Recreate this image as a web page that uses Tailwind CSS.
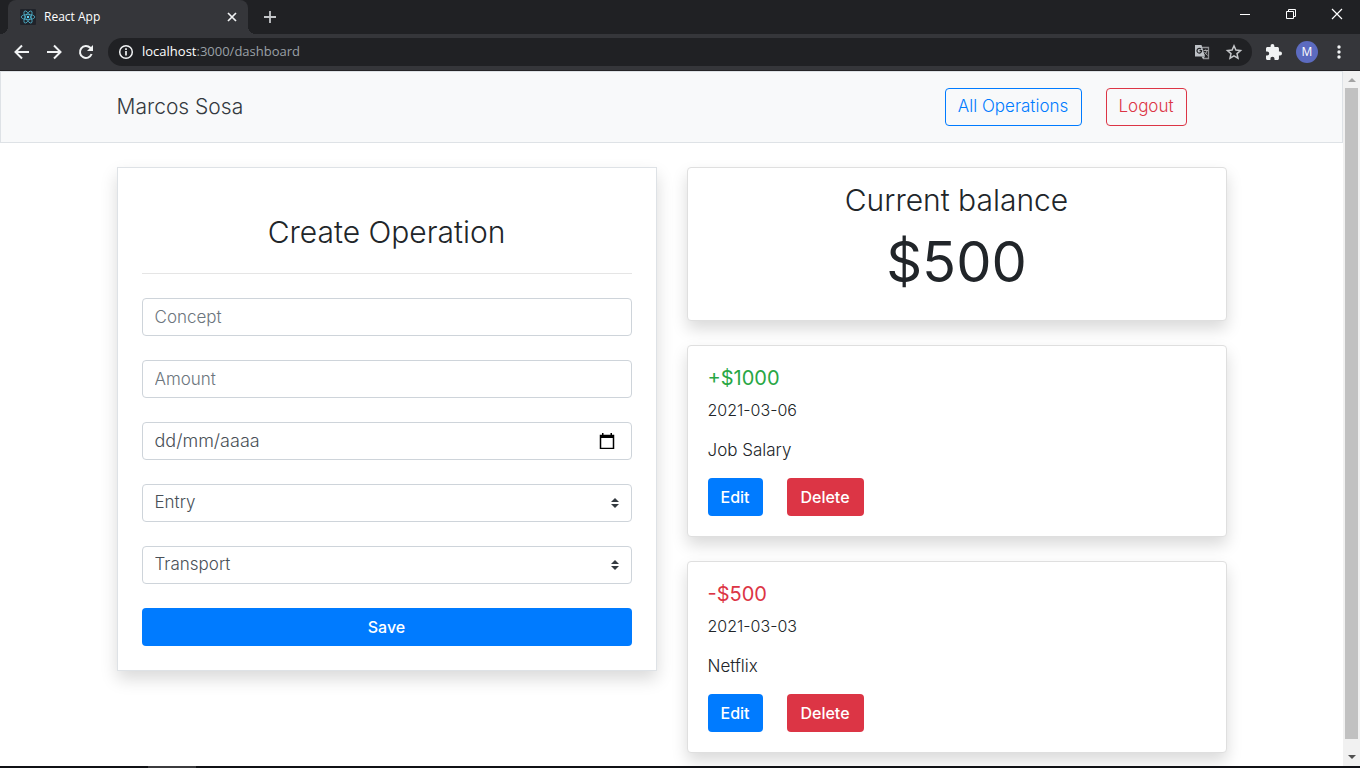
<!DOCTYPE html>
<html lang="en">
<head>
<meta charset="utf-8">
<title>React App</title>
<script src="https://cdn.jsdelivr.net/npm/@tailwindcss/browser@4"></script>
</head>
<body class="flex h-screen flex-col overflow-hidden bg-white font-['Inter',sans-serif] text-base text-[#212529]">

<!-- Browser window -->
<header class="flex-none border-b border-[#252427] bg-[#202124] font-['Open_Sans',sans-serif] text-white">
  <div class="flex h-[34px] pl-2">
    <div class="relative flex w-60 items-center rounded-t-lg bg-[#35363a] pr-2.5 pl-3">
      <span class="absolute bottom-0 -left-2 h-2 w-2 bg-[radial-gradient(circle_at_0_0,#202124_8px,#35363a_8px)]"></span>
      <span class="absolute -right-2 bottom-0 h-2 w-2 bg-[radial-gradient(circle_at_100%_0,#202124_8px,#35363a_8px)]"></span>
      <svg class="size-4" viewBox="0 0 16 16" fill="none" stroke="#4fb3cc" stroke-width=".8"><rect width="16" height="16" rx="1" fill="#20232a" stroke="none"/><ellipse cx="8" cy="8" rx="6.800" ry="2.600"/><ellipse cx="8" cy="8" rx="6.800" ry="2.600" transform="rotate(60 8 8)"/><ellipse cx="8" cy="8" rx="6.800" ry="2.600" transform="rotate(120 8 8)"/><circle cx="8" cy="8" r="1.200" fill="#61dafb" stroke="none"/></svg>
      <span class="ml-2 flex-1 text-xs">React App</span>
      <button aria-label="Close tab" class="flex size-3 items-center justify-center"><svg class="size-3" viewBox="0 0 12 12" stroke="#f1f3f4" stroke-width="1.700"><path d="M2 2l8 8M10 2l-8 8"/></svg></button>
    </div>
    <button aria-label="New tab" class="ml-4 flex w-3 items-center justify-center"><svg class="size-3 flex-none" viewBox="0 0 12 12" stroke="#c4c6c9" stroke-width="1.800"><path d="M6 0v12M0 6h12"/></svg></button>
    <div class="ml-auto flex h-7 items-center">
      <button aria-label="Minimize" class="flex w-[46px] justify-center"><svg class="size-3" viewBox="0 0 12 12" stroke="#fff"><path d="M1 6.500h10"/></svg></button>
      <button aria-label="Restore" class="flex w-[46px] justify-center"><svg class="size-3" viewBox="0 0 12 12" fill="none" stroke="#fff"><path d="M1.500 3.500h7v7h-7zM3.500 3.500v-2h7v7h-2"/></svg></button>
      <button aria-label="Close" class="flex w-[46px] justify-center"><svg class="size-3" viewBox="0 0 12 12" stroke="#fff" stroke-width="1.200"><path d="M1 1l10 10M11 1L1 11"/></svg></button>
    </div>
  </div>
  <div class="flex h-9 items-center bg-[#35363a] pr-2.5 pl-3">
    <button aria-label="Back" class="mr-3"><svg class="size-5" viewBox="0 0 20 20" fill="none" stroke="#f1f3f4" stroke-width="2"><path d="M17 10H4M10 3.500L3.500 10l6.500 6.500"/></svg></button>
    <button aria-label="Forward" class="mr-3"><svg class="size-5" viewBox="0 0 20 20" fill="none" stroke="#f1f3f4" stroke-width="2"><path d="M3 10h13M10 3.500l6.500 6.500-6.500 6.500"/></svg></button>
    <button aria-label="Reload" class="mr-3"><svg class="size-5" viewBox="0 0 20 20" fill="none" stroke="#f1f3f4" stroke-width="2"><path d="M15.600 12a6 6 0 1 1-1.300-6.200l1.500 1.500"/><path d="M17 3v6h-6z" fill="#f1f3f4" stroke="none"/></svg></button>
    <div class="flex h-7 flex-1 items-center rounded-full bg-[#202124] pr-2 pl-2">
      <svg class="size-5" viewBox="0 0 20 20" fill="none" stroke="#f1f3f4" stroke-width="1.500"><circle cx="10" cy="10" r="6.300"/><path d="M10 9v4.500M10 6.300v1.600" stroke-width="1.700"/></svg>
      <span class="ml-1.5 flex-1 text-[13px] text-[#9aa0a6]"><span class="text-white">localhost</span>:3000/dashboard</span>
      <button aria-label="Translate this page" class="mr-3.5"><svg class="size-4" viewBox="0 0 16 16"><path d="M6 3.500h8.500v11H9" fill="none" stroke="#8f9093" stroke-width="1.300"/><path d="M1 1h6.500l3.500 11.500H1z" fill="#bdc1c6"/><path d="M7.500 12.500h3.500l-2 2.500z" fill="#bdc1c6"/><path d="M7 5.200a2.300 2.300 0 1 0 .6 1.500H5.500" fill="none" stroke="#202124" stroke-width="1.200"/><path d="M9.500 6.500H14M11.700 5.500v1M13 6.800c-.5 2-1.500 3-2.500 3.700M10.500 8l3 3.500" fill="none" stroke="#a8a9ac"/></svg></button>
      <button aria-label="Bookmark this tab"><svg class="size-5" viewBox="0 0 20 20" fill="none" stroke="#c4c6c9" stroke-width="1.500"><path d="M10 3.800l1.900 4.300 4.600.4-3.500 3.100 1 4.600-4-2.400-4 2.400 1-4.600-3.500-3.100 4.600-.4z"/></svg></button>
    </div>
    <button aria-label="Extensions" class="ml-3.5"><svg class="size-4" viewBox="2 1 21 21" fill="#f1f3f4"><path d="M20.500 11H19V7c0-1.100-.9-2-2-2h-4V3.500a2.500 2.500 0 0 0-5 0V5H4c-1.100 0-2 .9-2 2v3.800h1.500a2.700 2.700 0 0 1 0 5.400H2V20c0 1.100.9 2 2 2h3.800v-1.500a2.700 2.700 0 0 1 5.400 0V22H17c1.100 0 2-.9 2-2v-4h1.500a2.500 2.500 0 0 0 0-5z"/></svg></button>
    <button class="ml-3.5 flex size-[22px] items-center justify-center rounded-full bg-[#5c6bc0] text-xs">M</button>
    <button aria-label="Menu" class="ml-3"><svg class="size-5" viewBox="0 0 20 20" fill="#f1f3f4"><circle cx="9" cy="5" r="1.700"/><circle cx="9" cy="10" r="1.700"/><circle cx="9" cy="15" r="1.700"/></svg></button>
  </div>
</header>

<div class="flex min-h-0 flex-1">
  <div class="flex-1 overflow-hidden">
    <nav class="border border-[#dee2e6] bg-[#f8f9fa] py-4">
      <div class="mx-auto flex max-w-[1140px] items-center pr-[55px] pl-[15px]">
        <a href="#" class="mr-auto text-[21px] leading-7 font-light text-[#343a40]">Marcos Sosa</a>
        <button class="h-[38px] w-[137px] rounded border border-[#007bff] text-[17px] font-light text-[#007bff]">All Operations</button>
        <button class="ml-6 h-[38px] w-[81px] rounded border border-[#dc3545] text-[17px] font-light text-[#dc3545]">Logout</button>
      </div>
    </nav>

    <main class="mx-auto grid max-w-[1140px] grid-cols-2 items-start gap-[30px] px-[15px] py-6">
      <form class="flex flex-col gap-6 border border-[#dee2e6] bg-white p-6 text-[17px] font-light text-[#495057] shadow-[0_8px_16px_rgba(0,0,0,0.15)]">
        <h2 class="mt-6 text-center text-[30px] leading-[33px] text-[#212529]">Create Operation</h2>
        <hr class="border-black/10">
        <input aria-label="Concept" placeholder="Concept" class="h-[38px] w-full rounded border border-[#ced4da] px-3 placeholder:text-[#6c757d]">
        <input aria-label="Amount" placeholder="Amount" class="h-[38px] w-full rounded border border-[#ced4da] px-3 placeholder:text-[#6c757d]">
        <div class="flex h-[38px] items-center rounded border border-[#ced4da] px-3">
          <input aria-label="Date" placeholder="dd/mm/aaaa" class="min-w-0 flex-1 text-lg placeholder:text-[#495057]">
          <button type="button" aria-label="Choose date" class="mr-1"><svg class="size-4" viewBox="0 0 16 16"><path d="M1.500 2.500h13v13h-13z" fill="none" stroke="#000" stroke-width="1.500"/><path d="M1 2h14v3H1zM3 0h1.500v2H3zM11.500 0H13v2h-1.500z"/></svg></button>
        </div>
        <div class="grid items-center">
          <select aria-label="Type" class="col-start-1 row-start-1 h-[38px] w-full appearance-none rounded border border-[#ced4da] px-3"><option>Entry</option><option>Egress</option></select>
          <svg class="pointer-events-none col-start-1 row-start-1 mr-[13px] h-2.5 w-2 justify-self-end" viewBox="0 0 8 10" fill="#343a40"><path d="M0 4l4-4 4 4zM0 6l4 4 4-4z"/></svg>
        </div>
        <div class="grid items-center">
          <select aria-label="Category" class="col-start-1 row-start-1 h-[38px] w-full appearance-none rounded border border-[#ced4da] px-3"><option>Transport</option><option>Food</option></select>
          <svg class="pointer-events-none col-start-1 row-start-1 mr-[13px] h-2.5 w-2 justify-self-end" viewBox="0 0 8 10" fill="#343a40"><path d="M0 4l4-4 4 4zM0 6l4 4 4-4z"/></svg>
        </div>
        <button type="submit" class="h-[38px] rounded bg-[#007bff] text-base font-medium text-white">Save</button>
      </form>

      <div class="flex flex-col gap-6">
        <section class="rounded border border-[#dfdfdf] bg-white pt-4 pb-5 text-center shadow-[0_8px_16px_rgba(0,0,0,0.15)]">
          <h3 class="text-[30px] leading-[33px] font-light">Current balance</h3>
          <p class="mt-2 text-[56px] leading-[75px]">$500</p>
        </section>
        <article class="rounded border border-[#dfdfdf] bg-white p-5 shadow-[0_8px_16px_rgba(0,0,0,0.15)]">
          <h5 class="mb-2 text-xl leading-6 text-[#28a745]">+$1000</h5>
          <p class="mb-4 font-light">2021-03-06</p>
          <p class="mb-4 text-[17px] leading-6 font-light">Job Salary</p>
          <div class="flex gap-6">
            <button class="h-[38px] w-[55px] rounded bg-[#007bff] font-medium text-white">Edit</button>
            <button class="h-[38px] w-[77px] rounded bg-[#dc3545] font-medium text-white">Delete</button>
          </div>
        </article>
        <article class="rounded border border-[#dfdfdf] bg-white p-5 shadow-[0_8px_16px_rgba(0,0,0,0.15)]">
          <h5 class="mb-2 text-xl leading-6 text-[#dc3545]">-$500</h5>
          <p class="mb-4 font-light">2021-03-03</p>
          <p class="mb-4 text-[17px] leading-6 font-light">Netflix</p>
          <div class="flex gap-6">
            <button class="h-[38px] w-[55px] rounded bg-[#007bff] font-medium text-white">Edit</button>
            <button class="h-[38px] w-[77px] rounded bg-[#dc3545] font-medium text-white">Delete</button>
          </div>
        </article>
      </div>
    </main>
  </div>

  <!-- Page scroll bar -->
  <div class="flex w-[17px] flex-none flex-col items-center bg-[#f1f1f1]">
    <div class="flex h-[17px] items-center"><svg class="h-1 w-2" viewBox="0 0 8 4" fill="#a3a3a3"><path d="M0 4l4-4 4 4z"/></svg></div>
    <div class="w-[13px] flex-1 bg-[#c1c1c1]"></div>
    <div class="flex h-[27px] items-center pt-2"><svg class="h-1 w-2" viewBox="0 0 8 4" fill="#505050"><path d="M0 0l4 4 4-4z"/></svg></div>
  </div>
</div>

<!-- Top edge of the desktop task bar -->
<footer class="flex h-0.5 flex-none bg-[#101115] pl-[148px]"><div class="w-12 bg-[#3b3b3d]"></div></footer>
</body>
</html>
